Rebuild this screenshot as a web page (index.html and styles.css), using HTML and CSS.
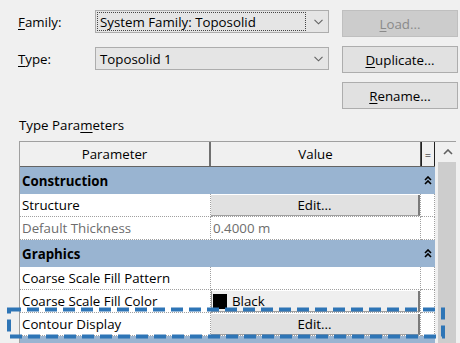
FILE: index.html
```html
<!DOCTYPE html>
<html>
<head>
<meta charset="utf-8">
<link rel="stylesheet" href="styles.css">
</head>
<body>
<div class="win">
  <div class="top">
    <div class="fields">
      <div class="field">
        <span class="lbl"><u>F</u>amily:</span>
        <div class="combo focus">
          <span class="ctext">System Family: Toposolid</span>
          <span class="arrow"><svg width="9" height="6" viewBox="0 0 9 6"><path d="M0.5 0.8 L4.5 4.8 L8.5 0.8" fill="none" stroke="#606060" stroke-width="1.1"/></svg></span>
        </div>
      </div>
      <div class="field">
        <span class="lbl"><u>T</u>ype:</span>
        <div class="combo">
          <span class="ctext">Toposolid 1</span>
          <span class="arrow"><svg width="9" height="6" viewBox="0 0 9 6"><path d="M0.5 0.8 L4.5 4.8 L8.5 0.8" fill="none" stroke="#606060" stroke-width="1.1"/></svg></span>
        </div>
      </div>
    </div>
    <div class="buttons">
      <div class="btn disabled"><u>L</u>oad...</div>
      <div class="btn"><u>D</u>uplicate...</div>
      <div class="btn"><u>R</u>ename...</div>
    </div>
  </div>

  <div class="tlabel">Type Para<u>m</u>eters</div>

  <div class="table">
    <div class="grid">
      <div class="row head">
        <div class="h hp">Parameter</div>
        <div class="h hv">Value</div>
        <div class="h he">=</div>
      </div>

      <div class="group">
        <span class="gtext">Construction</span>
        <span class="gicon"><svg width="8" height="9" viewBox="0 0 8 9"><path d="M1 4 L4 1 L7 4 M1 8 L4 5 L7 8" fill="none" stroke="#000" stroke-width="1.6"/></svg></span>
      </div>
      <div class="row">
        <div class="p">Structure</div>
        <div class="v"><div class="cellbtn">Edit...</div></div>
        <div class="e"></div>
      </div>
      <div class="row dis">
        <div class="p">Default Thickness</div>
        <div class="v vt">0.4000 m</div>
        <div class="e"></div>
      </div>

      <div class="group">
        <span class="gtext">Graphics</span>
        <span class="gicon"><svg width="8" height="9" viewBox="0 0 8 9"><path d="M1 4 L4 1 L7 4 M1 8 L4 5 L7 8" fill="none" stroke="#000" stroke-width="1.6"/></svg></span>
      </div>
      <div class="row">
        <div class="p">Coarse Scale Fill Pattern</div>
        <div class="v"></div>
        <div class="e"></div>
      </div>
      <div class="row">
        <div class="p">Coarse Scale Fill Color</div>
        <div class="v"><div class="cellbtn colorbtn"><span class="swatch"></span>Black</div></div>
        <div class="e"></div>
      </div>
      <div class="row">
        <div class="p">Contour Display</div>
        <div class="v"><div class="cellbtn">Edit...</div></div>
        <div class="e"></div>
      </div>
      <div class="group">
        <span class="gtext"></span>
        <span class="gicon"><svg width="8" height="9" viewBox="0 0 8 9"><path d="M1 4 L4 1 L7 4 M1 8 L4 5 L7 8" fill="none" stroke="#000" stroke-width="1.6"/></svg></span>
      </div>
    </div>
    <div class="gap"></div>
    <div class="scrollbar">
      <div class="sb-up"><svg width="10" height="6" viewBox="0 0 10 6"><path d="M1 5 L5 1 L9 5" fill="none" stroke="#606060" stroke-width="1.6"/></svg></div>
      <div class="sb-thumb"></div>
    </div>
  </div>
</div>

<svg class="highlight" width="446" height="38" viewBox="0 0 446 38">
  <rect x="4" y="3.5" width="434" height="27" fill="none" stroke="#2e75b6" stroke-width="4" stroke-dasharray="12 6"/>
</svg>
</body>
</html>
```

FILE: styles.css
```css
* { box-sizing: border-box; }
html, body { margin: 0; padding: 0; }
body {
  width: 460px;
  height: 343px;
  overflow: hidden;
  background: #f0f0f0;
  font-family: "Open Sans", "Noto Sans", sans-serif;
  font-size: 13.3px;
  color: #000;
  position: relative;
}
u { text-decoration: underline; text-underline-offset: 2px; }

.win { padding: 10px 0 0 18px; }

.top { display: flex; gap: 13px; }
.fields { display: flex; flex-direction: column; gap: 14px; width: 311px; }
.field { display: flex; align-items: center; height: 23px; }
.lbl { width: 77px; }
.combo {
  width: 234px;
  height: 23px;
  border: 1px solid #adadad;
  background: #e5e5e5;
  display: flex;
  align-items: stretch;
  padding: 1px 0 1px 1px;
}
.ctext {
  width: 209px;
  display: flex;
  align-items: center;
  padding-left: 3px;
  white-space: nowrap;
}
.combo.focus .ctext { outline: 1px dotted #444; outline-offset: -1px; }
.arrow { flex: 1; display: flex; align-items: center; justify-content: center; padding-left: 2px; }

.buttons { display: flex; flex-direction: column; gap: 9px; width: 116px; }
.btn {
  height: 27px;
  border: 1px solid #adadad;
  background: #e1e1e1;
  display: flex;
  align-items: center;
  justify-content: center;
}
.btn.disabled { background: #cccccc; border-color: #bfbfbf; color: #8a8a8a; }

.tlabel { margin-top: 8px; line-height: 16px; padding-left: 1px; }

.table {
  margin: 8px 0 0 1px;
  width: 437px;
  height: 202px;
  overflow: hidden;
  border-left: 1px solid #a0a0a0;
  border-top: 1px solid #a0a0a0;
  display: flex;
  background: #fff;
}
.grid { width: 415px; display: flex; flex-direction: column; }
.gap { width: 3px; background: #f0f0f0; }
.scrollbar { width: 18px; display: flex; flex-direction: column; background: #f0f0f0; }
.sb-up { height: 20px; display: flex; align-items: center; justify-content: center; padding-left: 1px; }
.sb-thumb { flex: 1; background: #cdcdcd; }

.row {
  display: grid;
  grid-template-columns: 191px 210px 14px;
  height: 23px;
  flex: none;
}
.row.head { height: 25px; background: #f0f0f0; border-bottom: 1px solid #646464; }
.h { display: flex; align-items: center; justify-content: center; }
.hp { border-right: 2px solid #707070; }
.hv { border-right: 1px solid #505050; }
.he { border: 1px solid #202020; border-bottom: none; margin-top: -1px; font-size: 11px; }

.p {
  border-right: 1px dotted #a0a0a0;
  border-bottom: 1px dotted #a0a0a0;
  padding-left: 2px;
  display: flex;
  align-items: center;
  white-space: nowrap;
}
.v {
  border-right: 1px dotted #a0a0a0;
  border-bottom: 1px dotted #a0a0a0;
  padding: 1px 0 0 0;
  display: flex;
}
.vt { align-items: center; padding: 0 0 0 2px; }
.e { border-right: 1px dotted #a0a0a0; border-bottom: 1px dotted #a0a0a0; }
.dis { color: #6d6d6d; }

.cellbtn {
  flex: 1;
  height: 21px;
  background: #e1e1e1;
  border-right: 2px solid #7a7a7a;
  border-bottom: 1px solid #a0a0a0;
  display: flex;
  align-items: center;
  justify-content: center;
}
.colorbtn {
  justify-content: flex-start;
  background: #efefef;
  border-left: 1px solid #9a9a9a;
  gap: 5px;
  padding-left: 1px;
}
.swatch { width: 14px; height: 15px; background: #000; }

.group {
  height: 27px;
  flex: none;
  background: #99b4d1;
  display: flex;
  align-items: center;
  font-weight: bold;
}
.gtext { flex: 1; padding-left: 2px; }
.gicon { width: 14px; display: flex; justify-content: center; padding-right: 1px; }

.highlight { position: absolute; left: 5px; top: 306px; }
```
